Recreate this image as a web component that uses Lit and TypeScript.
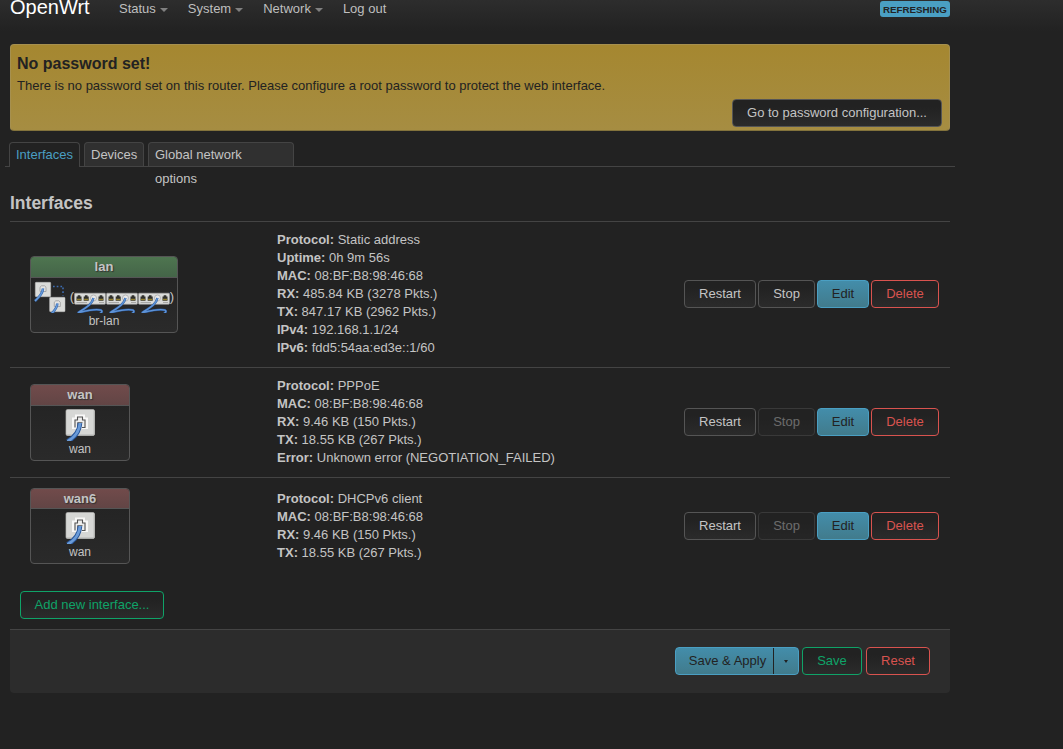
import { LitElement, html, svg, css, nothing } from "lit";
import { customElement } from "lit/decorators.js";

interface Iface {
  name: string;
  dev: string;
  kind: "lan" | "wan";
  up: boolean;
  info: [string, string][];
}

const wanInfo: [string, string][] = [
  ["MAC", "08:BF:B8:98:46:68"],
  ["RX", "9.46 KB (150 Pkts.)"],
  ["TX", "18.55 KB (267 Pkts.)"],
];

const IFACES: Iface[] = [
  {
    name: "lan", dev: "br-lan", kind: "lan", up: true,
    info: [
      ["Protocol", "Static address"],
      ["Uptime", "0h 9m 56s"],
      ["MAC", "08:BF:B8:98:46:68"],
      ["RX", "485.84 KB (3278 Pkts.)"],
      ["TX", "847.17 KB (2962 Pkts.)"],
      ["IPv4", "192.168.1.1/24"],
      ["IPv6", "fdd5:54aa:ed3e::1/60"],
    ],
  },
  {
    name: "wan", dev: "wan", kind: "wan", up: false,
    info: [["Protocol", "PPPoE"], ...wanInfo, ["Error", "Unknown error (NEGOTIATION_FAILED)"]],
  },
  {
    name: "wan6", dev: "wan", kind: "wan", up: false,
    info: [["Protocol", "DHCPv6 client"], ...wanInfo],
  },
];

const portIcon = html`<svg class="i32" viewBox="0 0 32 32">
  <rect x="2" y=".5" width="28.5" height="26" rx="1.5" fill="#d6d7d5" stroke="#b4b5b3" stroke-width=".7"/>
  <path d="M2.8 25.8H30V2" fill="none" stroke="#bdbebc"/>
  <path d="M9 19v-9.5h3V6.5h8v3h3V19z" fill="#ededec" stroke="#f8f8f7" stroke-width="2"/>
  <path d="M11 18.5V11h2.5V8h5v3H21v7.500h-3" fill="none" stroke="#555" stroke-width="1.1"/>
  <path d="M13.500 17v-3.500h5" fill="none" stroke="#777" stroke-width="1"/>
  <path d="M16 14C15.500 22 10.500 28.500 3.500 32.500" fill="none" stroke="#28569a" stroke-width="4.600"/>
  <path d="M16 14C15.500 22 10.500 28.500 3.500 32.500" fill="none" stroke="#6a9bd8" stroke-width="2.800"/>
</svg>`;

const miniPort = (x: number, y: number) => svg`<g transform="translate(${x} ${y})">
  <rect x=".3" y=".3" width="15.400" height="14.400" rx=".8" fill="#dadbd9" stroke="#bbb" stroke-width=".5"/>
  <path d="M5 9.500V5.200L6.500 3.800H9.500L11 5.200V9.500z" fill="#e4e4e3" stroke="#999" stroke-width=".8"/>
  <path d="M8 6.500C7.800 11 5.500 14 0 19" fill="none" stroke="#356bb5" stroke-width="2.600"/>
  <path d="M8 6.500C7.800 11 5.500 14 0 19" fill="none" stroke="#6a9bd8" stroke-width="1.300"/>
</g>`;

const bridgeIcon = html`<svg class="i32" viewBox="0 0 32 32">
  <path d="M19 5.500H29V14.500" fill="none" stroke="#3d6caf" stroke-width="1.600" stroke-dasharray="1.700 2"/>
  ${miniPort(1, 1)}${miniPort(15.300, 16)}
</svg>`;

const jack = (x: number) => svg`<path d="M${x} 19.800v-4.300h1.200v-1.300h2.600v1.300H${x + 5}v4.300z" fill="#30302c"/>
  <path d="M${x + .4} 18.500h4.200" stroke="#93802f" stroke-width="1.300"/>`;

const switchIcon = html`<svg class="i32" viewBox="0 0 32 32">
  <rect x=".6" y="12.200" width="30.800" height="11" rx=".6" fill="#dadbd9" stroke="#aaa" stroke-width=".6"/>
  ${jack(2.500)}${jack(9.700)}${jack(24.500)}
  <path d="M2.500 21.500H13M25 21.500H30" stroke="#999" stroke-width=".8"/>
  <circle cx="19.500" cy="17" r="3" fill="#e8e8e8" stroke="#aaa" stroke-width=".8"/>
  <path d="M19.500 17C18 24 11 27 3.800 32M4 31.800C13 29.500 22 27.500 27 29.200C28.500 30 28 31.500 26 32.500" fill="none" stroke="#28569a" stroke-width="2.300"/>
  <path d="M19.500 17C18 24 11 27 3.800 32M4 31.800C13 29.500 22 27.500 27 29.200C28.500 30 28 31.500 26 32.500" fill="none" stroke="#5e93d6" stroke-width="1.400"/>
</svg>`;

@customElement("app-root")
export class AppRoot extends LitElement {
  static styles = css`
    :host {
      display: block; height: 749px; overflow: hidden; background: #222; color: #c4c4c4;
      font: 13px/18px "Liberation Sans", Arial, sans-serif;
    }
    * { box-sizing: border-box; }
    header {
      height: 44px; background: linear-gradient(#2d2d2d, #222 31px);
      display: flex; align-items: flex-start; padding-left: 10px;
    }
    .brand { font-size: 20px; line-height: 20px; color: #fff; width: 109px; margin-top: -3px; }
    nav { display: flex; gap: 20px; flex: 1; }
    nav a { display: flex; align-items: center; gap: 4px; height: 18px; color: #bfbfbf; }
    .caret { border: 4px solid transparent; border-top-color: #808080; border-bottom: 0; margin-top: 2px; }
    .badge {
      width: 70px; height: 16px; margin: 1px 113px 0 0; border-radius: 3px; background: #4a9fc3;
      color: #222; font-size: 9.750px; font-weight: bold; line-height: 17px; text-align: center;
    }
    main { width: 940px; margin-left: 10px; }
    .alert {
      height: 87px; border: 1px solid #a6904f; border-bottom-color: #83733c; border-radius: 4px;
      background: linear-gradient(#a58730, #a68d42); color: #222; padding: 10px 7px 0 6px;
      display: flex; flex-direction: column;
    }
    .alert h4 { margin: 0 0 4px; font-size: 16px; line-height: 18px; }
    .alert .btn { align-self: flex-end; margin-top: 4px; width: 210px; }
    .btn {
      height: 28px; border: 1px solid #555; border-radius: 4px; background: linear-gradient(#222 25%, #2b2b2b);
      color: #c4c4c4; line-height: 26px; text-align: center; white-space: nowrap; flex: none;
    }
    .primary { background: linear-gradient(#438daa, #417b8c); border-color: #4a9fc3; color: #222; }
    .green { color: #0fa368; border-color: #0fa368; }
    .red { color: #d9534f; border-color: #d9534f; }
    .off { opacity: .45; }
    .tabs { display: flex; gap: 4px; height: 25px; margin: 11px -5px 26px; padding-left: 4px; border-bottom: 1px solid #444; }
    .tab { height: 24px; border: 1px solid #444; border-bottom: 0; border-radius: 4px 4px 0 0; background: #303030; line-height: 24px; padding: 0 6px; }
    .tab.on { height: 25px; background: #222; color: #4a9fc3; }
    .t1 { width: 71px; } .t2 { width: 60px; } .t3 { width: 146px; }
    h3 { margin: 0; height: 29px; font-size: 17.500px; line-height: 20px; border-bottom: 1px solid #444; }
    .row { display: grid; grid-template-columns: 267px 1fr auto; align-items: center; padding: 9px 11px 10px 0; border-bottom: 1px solid #444; }
    .row:last-child { border-bottom: 0; }
    .r-wan6 { padding-top: 10px; }
    .ops { display: grid; grid-template-columns: 72px 57px 52px 68px; gap: 2px; }
    .box { width: 100px; height: 77px; margin-left: 20px; border: 1px solid #555; border-radius: 4px; overflow: hidden; text-align: center; background: linear-gradient(#222, #2a2a2a); }
    .r-lan .box { width: 148px; }
    .r-wan6 .box { height: 76px; }
    .head { height: 21px; line-height: 20px; font-weight: bold; border-bottom: 1px solid #555; background: linear-gradient(#714b4b, #624545); text-shadow: 1px 1px 1px #333; }
    .up .head { background: linear-gradient(#4e7550, #446548); }
    .r-wan6 .head { height: 20px; }
    .icons { display: flex; justify-content: center; align-items: center; height: 32px; margin: 3px 0 0; }
    .i32 { width: 32px; height: 32px; display: block; flex: none; }
    .icons .p { width: 4px; display: flex; justify-content: center; }
    .icons .p.l { margin-left: 4px; }
    .name { font-size: 12px; line-height: 16px; }
    .add { width: 144px; margin: 17px 0 10px 10px; }
    footer { height: 63.500px; border-top: 1px solid #444; background: #2c2c2c; border-radius: 0 0 4px 4px; padding: 17px 20px; display: flex; justify-content: flex-end; gap: 4px; }
    .split { display: flex; width: 124px; margin-right: -1px; }
    .split span { flex: 1; padding-left: 6px; }
    .split i { width: 25px; height: 26px; border-left: 1px solid #222; display: flex; align-items: center; justify-content: center; }
    .split i::after { content: ""; border: 2.500px solid transparent; border-top: 3px solid #222; border-bottom: 0; }
    .save { width: 60px; } .reset { width: 64px; }
  `;

  render() {
    return html`
      <header>
        <div class="brand">OpenWrt</div>
        <nav>
          ${["Status", "System", "Network", "Log out"].map(
            (t) => html`<a>${t}${t === "Log out" ? nothing : html`<span class="caret"></span>`}</a>`
          )}
        </nav>
        <div class="badge">REFRESHING</div>
      </header>
      <main>
        <section class="alert">
          <h4>No password set!</h4>
          <div>There is no password set on this router. Please configure a root password to protect the web interface.</div>
          <div class="btn">Go to password configuration...</div>
        </section>
        <div class="tabs">
          <div class="tab on t1">Interfaces</div><div class="tab t2">Devices</div><div class="tab t3">Global network options</div>
        </div>
        <h3>Interfaces</h3>
        <section>
          ${IFACES.map((f) => html`
            <div class="row r-${f.name}">
              <div class="box ${f.up ? "up" : ""}">
                <div class="head">${f.name}</div>
                <div class="icons">${f.kind === "lan"
                  ? html`${bridgeIcon}<span class="p l">(</span>${switchIcon}${switchIcon}${switchIcon}<span class="p">)</span>`
                  : portIcon}</div>
                <div class="name">${f.dev}</div>
              </div>
              <div>${f.info.map(([k, v]) => html`<div><b>${k}:</b> ${v}</div>`)}</div>
              <div class="ops">
                <div class="btn">Restart</div>
                <div class="btn ${f.up ? "" : "off"}">Stop</div>
                <div class="btn primary">Edit</div>
                <div class="btn red">Delete</div>
              </div>
            </div>`)}
        </section>
        <div class="btn green add">Add new interface...</div>
        <footer>
          <div class="btn primary split"><span>Save &amp; Apply</span><i></i></div>
          <div class="btn green save">Save</div>
          <div class="btn red reset">Reset</div>
        </footer>
      </main>
    `;
  }
}
